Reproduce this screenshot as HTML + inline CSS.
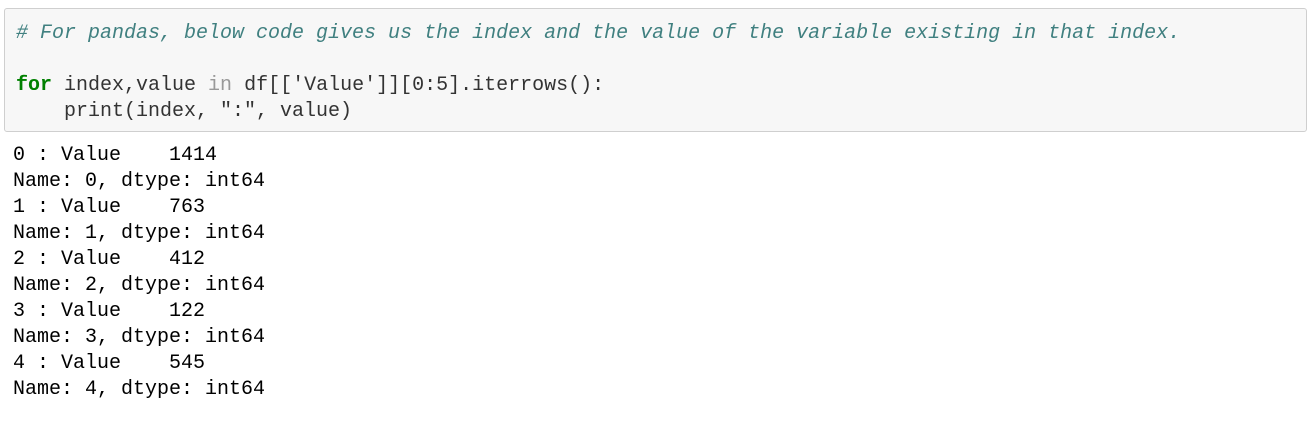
<!DOCTYPE html>
<html><head><style>
body{margin:0;background:#fff;width:1316px;height:446px;overflow:hidden;font-family:"Liberation Mono",monospace;font-size:20px;}
.box{position:absolute;left:4px;top:8px;width:1301px;height:122px;background:#f7f7f7;border:1px solid #cfcfcf;border-radius:3px;}
pre{margin:0;font-family:inherit;font-size:inherit;line-height:26px;color:#333;}
.code{position:absolute;left:11px;top:12px;}
.c{color:#408080;font-style:italic}
.k{color:#008000;font-weight:bold}
.i{color:#999}
.out{position:absolute;left:13px;top:143px;color:#000;}
</style></head><body>
<div class="box"><pre class="code"><span class="c"># For pandas, below code gives us the index and the value of the variable existing in that index.</span>

<span class="k">for</span> index,value <span class="i">in</span> df[['Value']][0:5].iterrows():
    print(index, ":", value)</pre></div>
<pre class="out">0 : Value    1414
Name: 0, dtype: int64
1 : Value    763
Name: 1, dtype: int64
2 : Value    412
Name: 2, dtype: int64
3 : Value    122
Name: 3, dtype: int64
4 : Value    545
Name: 4, dtype: int64</pre>
</body></html>
